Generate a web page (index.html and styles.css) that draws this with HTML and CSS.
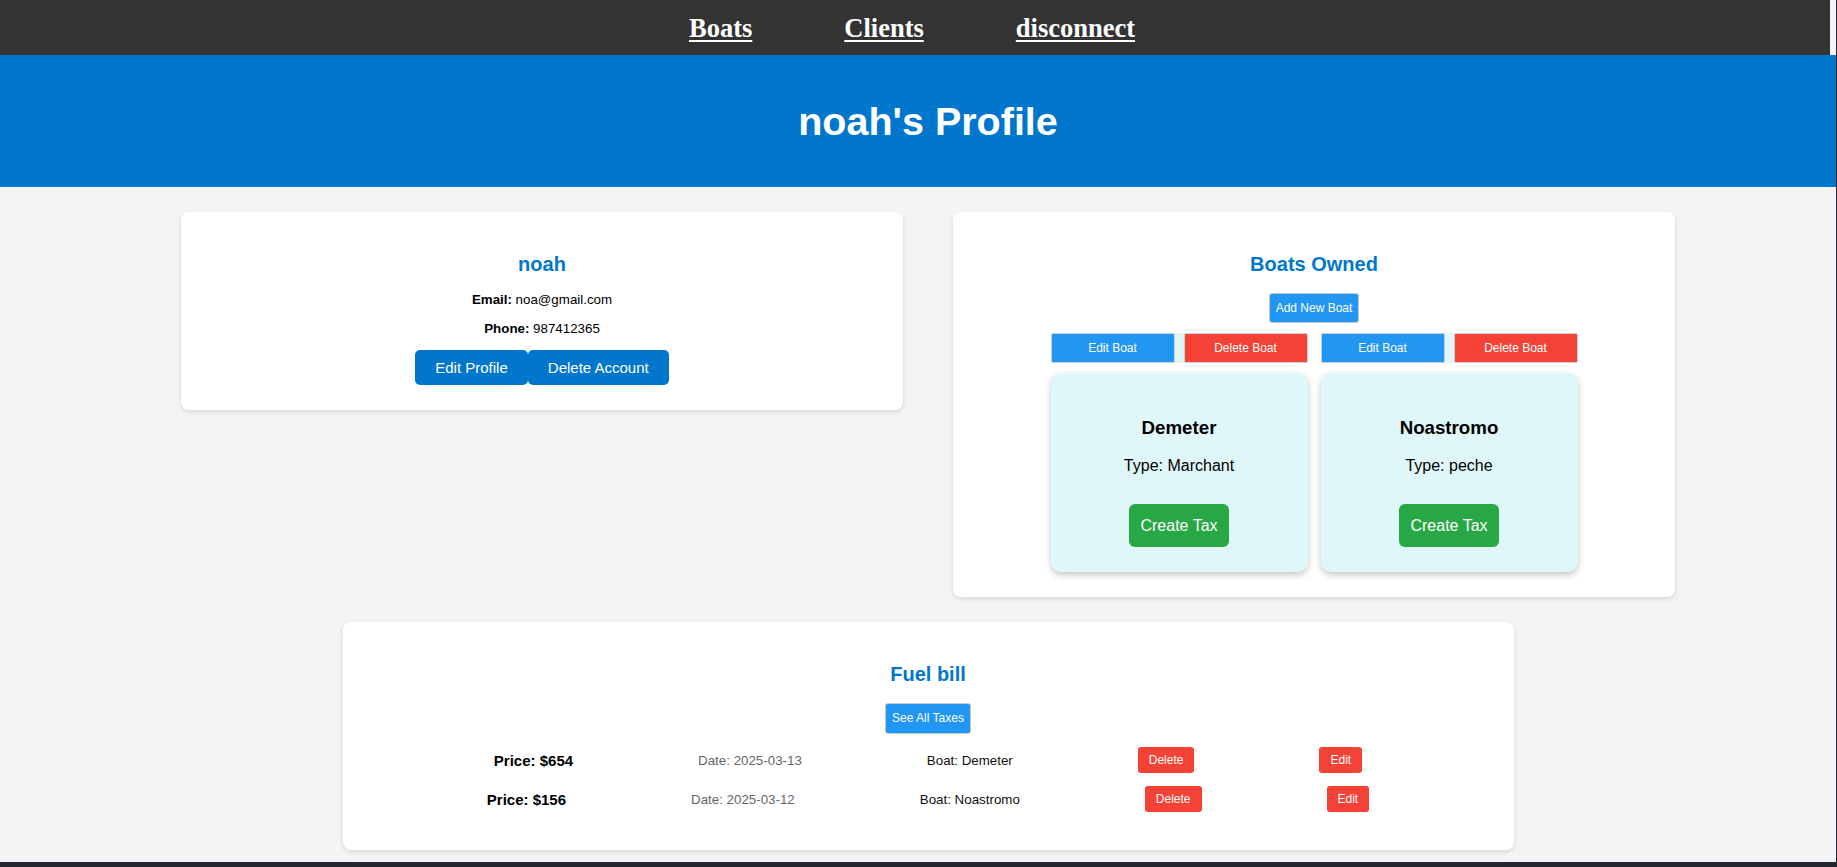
FILE: index.html
```html
<!DOCTYPE html>
<html lang="en">
<head>
<meta charset="utf-8">
<title>noah's Profile</title>
<link rel="stylesheet" href="styles.css">
</head>
<body>
<nav class="topnav">
  <a href="#">Boats</a>
  <a href="#">Clients</a>
  <a href="#">disconnect</a>
</nav>
<header class="hero">
  <h1>noah's Profile</h1>
</header>
<main class="page">
  <div class="top-grid">
    <section class="card profile">
      <h2 class="card-title">noah</h2>
      <p class="info"><strong>Email:</strong> noa@gmail.com</p>
      <p class="info"><strong>Phone:</strong> 987412365</p>
      <div class="profile-actions">
        <button class="btn-primary">Edit Profile</button>
        <button class="btn-primary">Delete Account</button>
      </div>
    </section>
    <section class="card boats">
      <h2 class="card-title">Boats Owned</h2>
      <button class="btn-small btn-blue btn-add">Add New Boat</button>
      <div class="boat-list">
        <div class="boat-item">
          <div class="boat-actions">
            <button class="btn-action btn-blue">Edit Boat</button>
            <button class="btn-action btn-red">Delete Boat</button>
          </div>
          <div class="boat-card">
            <h3>Demeter</h3>
            <p>Type: Marchant</p>
            <div class="boat-footer"><button class="btn-green">Create Tax</button></div>
          </div>
        </div>
        <div class="boat-item">
          <div class="boat-actions">
            <button class="btn-action btn-blue">Edit Boat</button>
            <button class="btn-action btn-red">Delete Boat</button>
          </div>
          <div class="boat-card">
            <h3>Noastromo</h3>
            <p>Type: peche</p>
            <div class="boat-footer"><button class="btn-green">Create Tax</button></div>
          </div>
        </div>
      </div>
    </section>
  </div>
  <section class="card fuel">
    <h2 class="card-title">Fuel bill</h2>
    <button class="btn-small btn-blue btn-taxes">See All Taxes</button>
    <div class="tax-list">
      <div class="tax-row">
        <span class="tax-price">Price: $654</span>
        <span class="tax-date">Date: 2025-03-13</span>
        <span class="tax-boat">Boat: Demeter</span>
        <button class="btn-tiny btn-red">Delete</button>
        <button class="btn-tiny btn-red">Edit</button>
      </div>
      <div class="tax-row">
        <span class="tax-price">Price: $156</span>
        <span class="tax-date">Date: 2025-03-12</span>
        <span class="tax-boat">Boat: Noastromo</span>
        <button class="btn-tiny btn-red">Delete</button>
        <button class="btn-tiny btn-red">Edit</button>
      </div>
    </div>
  </section>
</main>
<div class="frame-right"></div>
<div class="frame-bottom"></div>
</body>
</html>
```

FILE: styles.css
```css
html, body {
  margin: 0;
  padding: 0;
}
body {
  background: #f4f4f4;
  font-family: "Liberation Sans", Arial, sans-serif;
  color: #000;
  min-height: 867px;
}
button {
  font-family: "Liberation Sans", Arial, sans-serif;
  cursor: pointer;
  box-sizing: border-box;
}

/* top navigation */
.topnav {
  width: 1830px;
  height: 55px;
  box-sizing: border-box;
  padding-right: 6px;
  background: #333333;
  display: flex;
  justify-content: center;
  align-items: center;
  gap: 92px;
}
.topnav a {
  font-family: "Liberation Serif", "Times New Roman", serif;
  font-weight: bold;
  font-size: 26.5px;
  color: #ffffff;
  text-decoration: underline;
  text-decoration-thickness: 2px;
  text-underline-offset: 3px;
  line-height: 30px;
  margin-top: 1px;
}

/* hero */
.hero {
  width: 1836px;
  box-sizing: border-box;
  padding: 44px 0 44px 20px;
  background: #0077cc;
  text-align: center;
}
.hero h1 {
  margin: 0;
  font-size: 39.5px;
  line-height: 44px;
  color: #ffffff;
  font-weight: bold;
}

/* page */
.page {
  width: 1816px;
  padding-left: 20px;
  padding-bottom: 30px;
}
.top-grid {
  width: 1494px;
  margin: 25px auto 0;
  display: grid;
  grid-template-columns: 1fr 1fr;
  gap: 50px;
  align-items: start;
}
.card {
  background: #ffffff;
  border-radius: 8px;
  box-shadow: 0 2px 5px rgba(0, 0, 0, 0.12);
  padding: 20px;
  box-sizing: border-box;
  text-align: center;
}
.card-title {
  margin: 20.7px 0 16.6px;
  font-size: 20px;
  line-height: 23px;
  color: #0077cc;
  font-weight: bold;
}

/* profile */
.info {
  font-size: 13.33px;
  line-height: 15.33px;
  margin: 13.33px 0;
}
.profile-actions {
  display: flex;
  justify-content: center;
  margin-bottom: 5px;
}
.btn-primary {
  background: #0077cc;
  color: #ffffff;
  border: none;
  border-radius: 5px;
  font-size: 15px;
  line-height: 17px;
  padding: 9px 20px;
}

/* boats */
.btn-small {
  font-size: 12px;
  line-height: 14px;
  padding: 0 6px;
  border: 1px solid #c9c9c9;
  border-radius: 3px;
  color: #ffffff;
}
.btn-blue {
  background: #2196f3;
  color: #ffffff;
}
.btn-red {
  background: #f44336;
  color: #ffffff;
}
.btn-add {
  height: 30px;
  margin: 1px 0 10px;
}
.boat-list {
  display: flex;
  justify-content: center;
  gap: 13px;
  margin-bottom: 5px;
}
.boat-item {
  width: 257px;
}
.boat-actions {
  display: flex;
  justify-content: space-between;
  background: #e0f7fa;
  margin-bottom: 10px;
}
.btn-action {
  width: 124px;
  height: 30px;
  font-size: 12px;
  line-height: 14px;
  border: 1px solid #cfcfcf;
  border-radius: 2px;
  padding: 0;
}
.boat-card {
  background: #e0f7fa;
  border-radius: 10px;
  padding: 25px 20px;
  box-shadow: 0 3px 7px rgba(0, 0, 0, 0.22);
  text-align: center;
}
.boat-card h3 {
  font-size: 18.72px;
  line-height: 21.5px;
  margin: 18.72px 0;
  font-weight: bold;
}
.boat-card p {
  font-size: 16px;
  line-height: 18.4px;
  margin: 16px 0 0;
}
.boat-footer {
  margin-top: 28.7px;
}
.btn-green {
  background: #28a745;
  color: #ffffff;
  border: none;
  border-radius: 6px;
  font-size: 16px;
  line-height: 19px;
  padding: 12px 11px;
}

/* fuel */
.fuel {
  width: 1171px;
  margin: 25px auto 0;
  padding-bottom: 38px;
}
.btn-taxes {
  height: 31px;
}
.tax-list {
  margin-top: 13.7px;
  display: flex;
  flex-direction: column;
  gap: 13px;
}
.tax-row {
  display: flex;
  justify-content: center;
  align-items: center;
  gap: 125px;
  height: 26px;
}
.tax-price {
  font-size: 15px;
  font-weight: bold;
}
.tax-date {
  font-size: 13.33px;
  color: #666666;
}
.tax-boat {
  font-size: 13.33px;
  color: #111111;
}
.btn-tiny {
  font-size: 12px;
  line-height: 14px;
  height: 26px;
  padding: 0 11px;
  border: none;
  border-radius: 3px;
}

/* window frame */
.frame-right {
  position: fixed;
  top: 0;
  right: 0;
  width: 1px;
  height: 100%;
  background: #23272f;
}
.frame-bottom {
  position: fixed;
  left: 0;
  bottom: 0;
  width: 100%;
  height: 5px;
  background: #23272f;
}
```
